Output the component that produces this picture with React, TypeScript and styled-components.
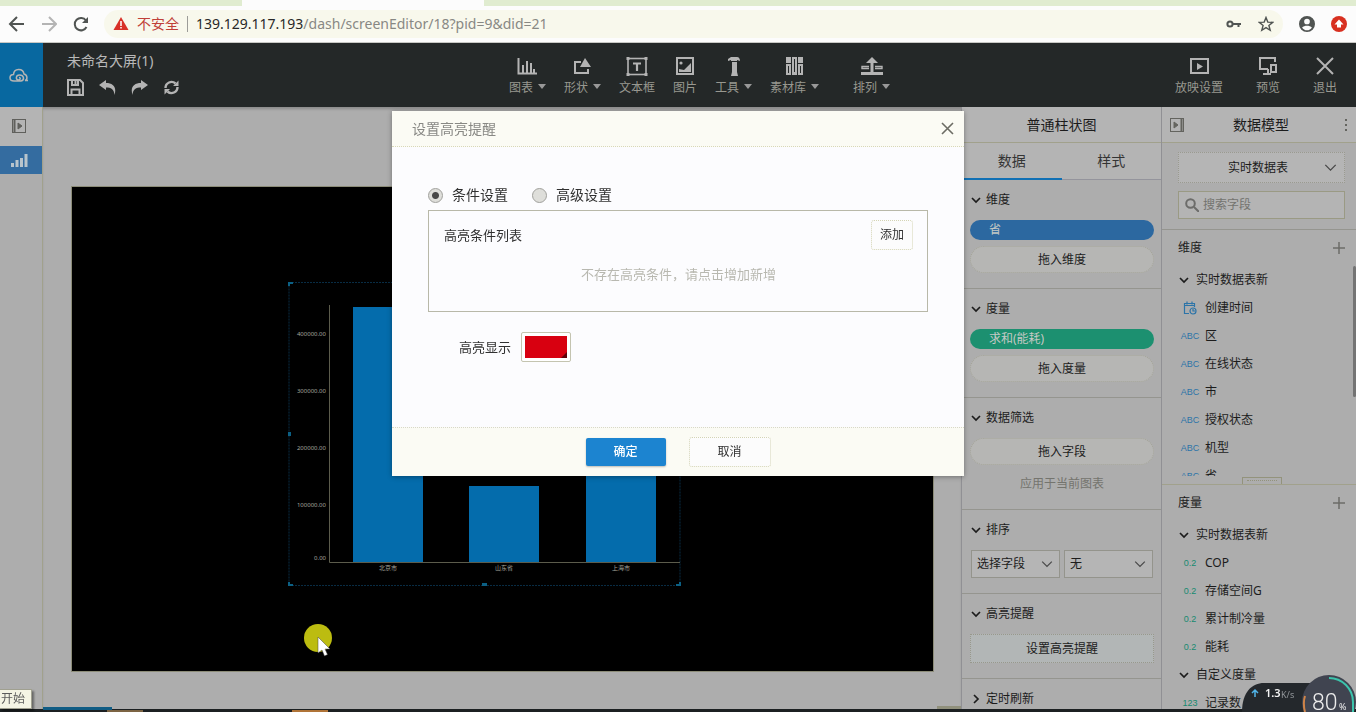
import React from "react";
import styled, { createGlobalStyle, css } from "styled-components";

const Global = createGlobalStyle`
  * { box-sizing: border-box; }
  html, body, #root { height: 100%; }
  body {
    margin: 0;
    overflow: hidden;
    font: 12px/20px "Noto Sans", "Noto Sans CJK SC", sans-serif;
    color: #1c1c1c;
    background: #aeaeae;
  }
  button, input, select { font: inherit; color: inherit; margin: 0; }
  button { border: 0; padding: 0; background: none; cursor: pointer; }
  a { color: inherit; text-decoration: none; }
  h1, h2, p, ul { margin: 0; padding: 0; font-weight: 400; font-size: inherit; list-style: none; }
`;

const c = {
  gray: "#adadad",
  light: "#b4b4b4",
  line: "#95958f",
  edge: "#a1a18c",
  dark: "#242828",
  icon: "#b4b4b4",
};

const Shell = styled.div`
  display: flex;
  flex-direction: column;
  height: 100vh;
`;

/* ---------- browser bar ---------- */
const Browser = styled.header`
  flex: none;
  background: #fcfcfc;
  border-bottom: 1px solid #c8c8c4;
`;
const TabStrip = styled.div`
  display: grid;
  grid-template-columns: 242px 242px 1fr;
  height: 6px;
  background: #e0ecd0;
`;
const ActiveTab = styled.div`
  grid-column: 2;
  background: #fcfcfc;
`;
const AddressRow = styled.div`
  display: flex;
  align-items: center;
  gap: 16px;
  height: 36px;
  padding: 0 9px 0 8px;
`;
const NavButton = styled.button<{ $dim?: boolean }>`
  display: flex;
  color: ${(p) => (p.$dim ? "#b4b4b4" : "#505452")};
`;
const Address = styled.div`
  flex: 1;
  display: flex;
  align-items: center;
  gap: 8px;
  height: 28px;
  margin-left: -1px;
  padding: 0 9px;
  border-radius: 14px;
  background: #f8f8ec;
  font-size: 14px;
`;
const PageActions = styled.div`
  display: flex;
  align-items: center;
  gap: 17px;
`;
const Insecure = styled.span`
  color: #c04038;
  padding-right: 8px;
  border-right: 1px solid #9c9c98;
  line-height: 16px;
`;
const Url = styled.span`
  flex: 1;
  color: #888884;
  b { font-weight: 400; color: #282828; }
`;

/* ---------- editor bar ---------- */
const EditorBar = styled.header`
  flex: none;
  display: grid;
  grid-template-columns: 43px 1fr auto 1fr;
  height: 64px;
  background: ${c.dark};
  color: ${c.icon};
`;
const Logo = styled.a`
  display: flex;
  align-items: center;
  justify-content: center;
  padding-right: 5px;
  background: #0868a0;
`;
const TitleBlock = styled.div`
  padding: 8px 24px;
  h1 { font-size: 14px; line-height: 20px; color: #b8b8b8; }
`;
const QuickActions = styled.div`
  display: flex;
  gap: 15px;
  margin-top: 8px;
  button { display: flex; color: ${c.icon}; }
`;
const Tools = styled.nav`
  display: flex;
  align-items: flex-start;
  gap: 18px;
  padding-top: 13px;
`;
const ToolButton = styled.button<{ $apart?: boolean }>`
  display: flex;
  flex-direction: column;
  align-items: center;
  gap: 1px;
  margin-left: ${(p) => (p.$apart ? "16px" : "0")};
  color: ${c.icon};
`;
const ToolLabel = styled.span`
  display: flex;
  align-items: center;
  gap: 5px;
  color: #989890;
`;
const Caret = styled.i`
  border: 4px solid transparent;
  border-top: 5px solid #989898;
  border-bottom: 0;
  margin-top: -3px;
`;
const RightTools = styled(Tools)`
  justify-content: flex-end;
  gap: 33px;
  padding-right: 19px;
`;

/* ---------- workspace ---------- */
const Work = styled.div`
  flex: 1;
  min-height: 0;
  display: flex;
  background: ${c.gray};
`;
const Rail = styled.nav`
  flex: none;
  width: 43px;
  border-right: 1px solid ${c.edge};
`;
const RailButton = styled.button<{ $active?: boolean }>`
  display: flex;
  align-items: center;
  justify-content: center;
  width: 100%;
  padding: ${(p) => (p.$active ? "0 4px 0 0" : "0 4px 2px 0")};
  height: ${(p) => (p.$active ? "28px" : "39px")};
  background: ${(p) => (p.$active ? "#346ca0" : c.light)};
  color: ${(p) => (p.$active ? "#b8c4cc" : "#60605c")};
`;
const CanvasArea = styled.main`
  flex: 1;
  min-width: 0;
  padding: 79px 27px 37px 28px;
  display: flex;
  box-shadow: inset 0 3px 3px -1px rgba(0, 0, 0, 0.2);
`;
const Stage = styled.div`
  flex: 1;
  position: relative;
  overflow: hidden;
  background: #000;
  border: 1px solid #8c8c78;
`;
const ChartWidget = styled.div`
  position: absolute;
  left: 216px;
  top: 95px;
  width: 393px;
  height: 306px;
  svg { display: block; }
`;

/* ---------- panels ---------- */
const Panel = styled.aside<{ $w: number }>`
  flex: none;
  width: ${(p) => p.$w}px;
  display: flex;
  flex-direction: column;
  overflow: hidden;
  border-left: 1px solid #909094;
`;
const PanelTitle = styled.div`
  flex: none;
  display: flex;
  align-items: center;
  justify-content: space-between;
  height: 36px;
  padding: 0 8px;
  background: ${c.light};
  border-bottom: 1px solid ${c.edge};
  font-size: 14px;
  h2 { flex: 1; text-align: center; }
  button { display: flex; justify-content: flex-end; min-width: 10px; color: #64645f; }
`;
const Tabs = styled.div`
  flex: none;
  display: grid;
  grid-template-columns: 1fr 1fr;
  height: 37px;
  background: ${c.light};
`;
const Tab = styled.button<{ $on?: boolean }>`
  font-size: 14px;
  color: #343434;
  border-bottom: ${(p) => (p.$on ? "2px solid #1070b4" : "1px solid #94949c")};
`;
const Section = styled.section`
  flex: none;
  padding: 10px 7px 15px 8px;
  border-bottom: 1px solid ${c.line};
`;
const SectionHead = styled.button`
  display: flex;
  align-items: center;
  gap: 5px;
  padding-left: 1px;
  margin-bottom: 10px;
`;
const FieldPill = styled.div<{ $color: string }>`
  padding: 0 19px;
  margin-bottom: 6px;
  border-radius: 10px;
  background: ${(p) => p.$color};
  color: #c4c8c4;
`;
const DropZone = styled.div`
  height: 27px;
  line-height: 26px;
  border: 1px dotted #a4a498;
  border-radius: 14px;
  background: #b6b6b4;
  text-align: center;
`;
const Scope = styled.p`
  margin-top: 9px;
  text-align: center;
  color: #74746e;
`;
const TwoSelects = styled.div`
  display: grid;
  grid-template-columns: 1fr 1fr;
  gap: 4px;
  padding: 0 1px;
`;
const SelectWrap = styled.div<{ $dotted?: boolean; $h: number }>`
  display: grid;
  align-items: center;
  height: ${(p) => p.$h}px;
  border: 1px ${(p) => (p.$dotted ? "dotted #9a9a90" : "solid #94948c")};
  background: #b5b5b5;
  > * { grid-area: 1 / 1; }
  > svg { justify-self: end; margin-right: ${(p) => (p.$dotted ? 7 : 6)}px; pointer-events: none; color: #484848; }
  select {
    appearance: none;
    width: 100%;
    height: 100%;
    padding: 0 5px;
    border: 0;
    background: transparent;
    ${(p) => p.$dotted && css`text-align-last: center; padding-right: 12px;`}
  }
`;
const WideButton = styled.button`
  display: block;
  width: 100%;
  height: 29px;
  border: 1px dotted #98988c;
  background: #b2b6b6;
`;
const ModelTop = styled.div`
  flex: none;
  display: flex;
  flex-direction: column;
  gap: 8px;
  padding: 9px 11px 10px 16px;
  border-bottom: 1px solid ${c.line};
`;
const Search = styled.label`
  display: flex;
  align-items: center;
  gap: 4px;
  height: 28px;
  padding-left: 6px;
  border: 1px solid #9a9a84;
  background: ${c.light};
  color: #6c6c6a;
  input {
    flex: 1;
    min-width: 0;
    border: 0;
    padding: 0;
    outline: 0;
    background: transparent;
    &::placeholder { color: #73736f; opacity: 1; }
  }
`;
const Group = styled.section<{ $h?: number }>`
  flex: none;
  position: relative;
  ${(p) => p.$h && css`height: ${p.$h}px; border-bottom: 1px solid ${c.edge};`}
`;
const GroupHead = styled.div`
  display: flex;
  align-items: center;
  justify-content: space-between;
  height: 36px;
  padding: 0 11px 0 16px;
  button { display: flex; color: #6c6c68; }
`;
const Tree = styled.ul<{ $h?: number }>`
  overflow: hidden;
  ${(p) => p.$h && css`height: ${p.$h}px;`}
`;
const Branch = styled.li`
  display: flex;
  align-items: center;
  gap: 7px;
  height: 28px;
  padding-left: 17px;
`;
const Leaf = styled.li`
  display: grid;
  grid-template-columns: 14px 1fr;
  align-items: center;
  gap: 8px;
  height: 28px;
  padding-left: 21px;
`;
const Kind = styled.span<{ $green?: boolean; $narrow?: boolean }>`
  display: flex;
  justify-content: center;
  white-space: nowrap;
  font: ${(p) => (p.$narrow ? '9px/14px "Liberation Sans Narrow"' : '9px/14px "Liberation Sans"')}, sans-serif;
  color: ${(p) => (p.$green ? "#168a70" : "#2c74a8")};
`;
const Handle = styled.div`
  position: absolute;
  right: 74px;
  bottom: 0;
  width: 40px;
  height: 7px;
  border: 1px solid #93937c;
  border-bottom: 0;
  &::before {
    content: "";
    display: block;
    margin: 2px 4px;
    border-top: 1px dotted #93937c;
  }
`;
const Thumb = styled.div`
  position: absolute;
  right: 0;
  top: 36px;
  width: 3px;
  height: 131px;
  border-radius: 2px;
  background: #747474;
`;
const TaskStrip = styled.footer`
  flex: none;
  display: flex;
  height: 3px;
  background: #1c2022;
`;
const TaskMark = styled.i<{ $x: number; $w: number; $color: string }>`
  width: ${(p) => p.$w}px;
  margin: 1px 0 0 ${(p) => p.$x}px;
  background: ${(p) => p.$color};
`;

/* ---------- dialog ---------- */
const Overlay = styled.div`
  position: fixed;
  inset: 0;
  display: flex;
  align-items: flex-start;
  justify-content: center;
  padding-top: 111px;
`;
const Dialog = styled.div`
  width: 572px;
  background: #fcfcfe;
  box-shadow: 0 1px 5px rgba(0, 0, 0, 0.35);
  border-radius: 0 0 2px 2px;
`;
const DialogHead = styled.div`
  display: flex;
  align-items: center;
  justify-content: space-between;
  height: 36px;
  padding: 0 10px 0 20px;
  background: #fbfbf4;
  border-bottom: 1px dotted #d8d8b8;
  font-size: 14px;
  color: #888884;
  button { display: flex; color: #6c6c64; }
`;
const DialogBody = styled.div`
  height: 280px;
  padding: 38px 36px 0;
  font-size: 13px;
  color: #303030;
`;
const Radios = styled.div`
  display: flex;
  gap: 24px;
  height: 25px;
  align-items: flex-start;
  font-size: 14px;
  label { display: flex; align-items: center; gap: 9px; }
  input {
    appearance: none;
    width: 15px;
    height: 15px;
    border: 1px solid #a0a09c;
    border-radius: 50%;
    background: #dededa;
    &:checked { background: radial-gradient(circle, #484848 0 3px, #dededa 4px); }
  }
`;
const Conditions = styled.div`
  height: 102px;
  padding: 9px 14px 0 15px;
  border: 1px solid #b8b8a8;
  p { text-align: center; color: #b8b8b0; margin-top: 14px; }
`;
const ConditionsHead = styled.div`
  display: flex;
  align-items: center;
  justify-content: space-between;
`;
const PlainButton = styled.button<{ $w: number }>`
  width: ${(p) => p.$w}px;
  height: 30px;
  border: 1px dotted #d4d4b4;
  border-radius: 3px;
  background: #fcfcfc;
  font-size: 12px;
  color: #303030;
`;
const PrimaryButton = styled.button`
  width: 80px;
  height: 28px;
  border-radius: 2px;
  background: #1c84d0;
  box-shadow: 0 1px 2px rgba(0, 0, 0, 0.25);
  color: #fff;
  font-size: 12px;
  font-weight: 500;
`;
const ColorRow = styled.label`
  display: flex;
  align-items: center;
  gap: 10px;
  margin: 20px 0 0 31px;
`;
const Swatch = styled.span`
  position: relative;
  display: flex;
  input {
    appearance: none;
    width: 50px;
    height: 30px;
    padding: 3px;
    border: 1px solid #c4c4b0;
    border-radius: 2px;
    background: #fff;
  }
  input::-webkit-color-swatch-wrapper { padding: 0; }
  input::-webkit-color-swatch { border: 0; border-radius: 0; }
  &::after {
    content: "";
    position: absolute;
    right: 4px;
    bottom: 4px;
    border: 3px solid transparent;
    border-right-color: #600008;
    border-bottom-color: #600008;
  }
`;
const DialogFoot = styled.div`
  display: flex;
  align-items: center;
  justify-content: center;
  gap: 23px;
  height: 49px;
  background: #fbfbf4;
  border-top: 1px dotted #d8d8c8;
`;

/* ---------- floating items ---------- */
const Floating = styled.div`
  position: fixed;
  display: flex;
`;
const SpeedBall = styled(Floating)`right: 0; bottom: 0;`;
const Pointer = styled(Floating)`left: 304px; top: 624px;`;
const StartTip = styled(Floating)`
  left: 0;
  bottom: 3px;
  width: 32px;
  padding-left: 1px;
  background: #f4f4e4;
  border: 1px solid #a0a090;
  border-left: 0;
  box-shadow: 2px 2px 2px rgba(0, 0, 0, 0.4);
  color: #5c5c5c;
  line-height: 18px;
`;
const TaskProgress = styled(Floating)`
  left: 43px;
  bottom: 2px;
  width: 69px;
  height: 3px;
  background: #105c84;
`;
const ScrollMark = styled.div`
  position: fixed;
  right: 395px;
  bottom: 3px;
  width: 24px;
  height: 3px;
  background: #90907c;
`;

type IconProps = { w?: number; h?: number; children: React.ReactNode; sw?: number; fill?: boolean; box?: string };
const Svg = ({ w = 20, h = 20, children, sw = 2, fill, box }: IconProps) => (
  <svg width={w} height={h} viewBox={box ?? `0 0 ${w} ${h}`} aria-hidden="true"
    fill={fill ? "currentColor" : "none"} stroke={fill ? "none" : "currentColor"} strokeWidth={sw}>
    {children}
  </svg>
);
const Down = ({ size = 10, sw = 1.7 }: { size?: number; sw?: number }) => (
  <Svg w={size} h={size} box="0 0 10 10" sw={sw}><path d="M1 3l4 4 4-4" /></Svg>
);

const tools = [
  { label: "图表", caret: true, icon: <Svg h={21}><path d="M1.5 2v15.5H20M6 17V9M10 17V5M14 17V7M17 17v-4" /></Svg> },
  { label: "形状", caret: true, icon: <Svg h={21}><path d="M9 6H3v11h13v-4" /><path d="M13 2l6 9H8z" fill="currentColor" stroke="none" /></Svg> },
  {
    label: "文本框",
    icon: (
      <Svg w={22} h={21} sw={1.6}>
        <rect x="2" y="2.500" width="18" height="16" />
        <path d="M0.500 1h3v3h-3zM18.500 1h3v3h-3zM0.500 17h3v3h-3zM18.500 17h3v3h-3z" fill="currentColor" stroke="none" />
        <path d="M7 7.500h8M11 7.500v7.500" strokeWidth={2.2} />
      </Svg>
    ),
  },
  { label: "图片", icon: <Svg h={21}><rect x="2" y="2" width="16" height="16" /><path d="M4 16v-3l5 1 7-7v9z" fill="currentColor" stroke="none" /><circle cx="6" cy="7" r="1.6" fill="currentColor" stroke="none" /></Svg> },
  { label: "工具", caret: true, icon: <Svg h={21} fill><path d="M4 3l3-2h6c2 0 3 2 3 4l-3-1v1H7V4L4 5zM8 6h5v10l1 4H7l1-4z" /></Svg> },
  { label: "素材库", caret: true, icon: <Svg h={21} fill><path d="M1 1h5v6H1zM1 8h5v11H1zM7 1h5v18H7zM13 1h5v6h-5zM13 8h5v11h-5z" /><path d="M3 10h1v7H3zM9 3h1v13H9zM15 10h1v7h-1z" fill={c.dark} /></Svg> },
  { label: "排列", caret: true, apart: true, icon: <Svg w={22} h={21}><path d="M8 10.500H1v2h7M14 10.500h7v2h-7" strokeWidth={1.4} /><path d="M0 17.500h22M11 17V6" strokeWidth={3} /><path d="M11 1l6 6H5z" fill="currentColor" stroke="none" /></Svg> },
];
const rightTools = [
  { label: "放映设置", icon: <Svg h={21}><rect x="2" y="3" width="17" height="14" /><path d="M8 7l6 3.500L8 14z" fill="currentColor" stroke="none" /></Svg> },
  { label: "预览", icon: <Svg h={21}><path d="M10 13H2V2h15v4M10 13v5M5 18h8" /><rect x="13" y="9" width="5" height="7" /></Svg> },
  { label: "退出", icon: <Svg h={21}><path d="M2 2l16 16M18 2L2 18" /></Svg> },
];
const dimensions = ["区", "在线状态", "市", "授权状态", "机型", "省"];
const measures = ["COP", "存储空间G", "累计制冷量", "能耗"];

const yTicks: [string, number][] = [["400000.00", 53], ["300000.00", 110], ["200000.00", 167], ["100000.00", 224], ["0.00", 277]];
const bars: [string, number, number][] = [["北京市", 65, 25], ["山东省", 181, 204], ["上海市", 298, 90]];

const Chart = () => (
  <ChartWidget>
    <svg width="393" height="306" role="img" aria-label="普通柱状图">
      <rect x="1" y="0.500" width="391" height="303" fill="none" stroke="#082c44" strokeDasharray="2 1" />
      {yTicks.map(([t, y]) => (
        <text key={t} x="38" y={y + 1} textAnchor="end" fontSize="6" fill="#a4a49c">{t}</text>
      ))}
      <path d="M41.500 23V280.500H392" fill="none" stroke="#5c5c4c" />
      {bars.map(([t, x, top]) => (
        <g key={t}>
          <rect x={x} y={top} width="70" height={280 - top} fill="#046cac" />
          <text x={x + 35} y="288" textAnchor="middle" fontSize="6" fill="#a4a49c">{t}</text>
        </g>
      ))}
      <path d="M1 4V1h4M1 300v3h4M388 303h4v-3" fill="none" stroke="#0c6084" strokeWidth="2" />
      <path d="M0 150h3v4H0zM194 301h5v3h-5z" fill="#0c6084" />
    </svg>
  </ChartWidget>
);

const Head = ({ children }: { children: React.ReactNode }) => (
  <SectionHead type="button"><Down />{children}</SectionHead>
);
const CalendarIcon = () => (
  <Svg w={14} h={14} sw={1.2}><path d="M6 12.500H1.500V2.500H11.500V6M1.500 4.500H11.500M4 0.500v3M9 0.500v3" /><circle cx="10" cy="10" r="3" /><path d="M10 8v2h2" /></Svg>
);
const Plus = () => <Svg w={12} h={12} sw={1.5}><path d="M6 0v12M0 6h12" /></Svg>;

export default function App() {
  return (
    <>
      <Global />
      <Shell>
        <Browser>
          <TabStrip><ActiveTab /></TabStrip>
          <AddressRow>
            <NavButton aria-label="后退"><Svg w={17} h={16}><path d="M16 8H2M9 1L2 8l7 7" /></Svg></NavButton>
            <NavButton aria-label="前进" $dim><Svg w={16} h={16}><path d="M1 8h13M8 1l7 7-7 7" /></Svg></NavButton>
            <NavButton aria-label="重新加载"><Svg w={16} h={16}><path d="M13.500 11A6.200 6.200 0 1 1 13 4.500" /><path d="M15 1v6H9z" fill="currentColor" stroke="none" /></Svg></NavButton>
            <Address>
              <svg width="16" height="16" viewBox="0 0 16 16" aria-hidden="true"><path d="M8 1l7.500 13H.5z" fill="#d83028" /><path d="M8 5v5M8 11v1.500" stroke="#fff" strokeWidth="1.500" /></svg>
              <Insecure>不安全</Insecure>
              <Url><b>139.129.117.193</b>/dash/screenEditor/18?pid=9&amp;did=21</Url>
              <PageActions>
                <NavButton aria-label="密码"><Svg w={15} h={12} sw={2}><circle cx="4" cy="6" r="2.600" /><path d="M7 6h8M12.500 6v3" /></Svg></NavButton>
                <NavButton aria-label="收藏"><Svg w={16} h={16} sw={1.4}><path d="M8 1.500l1.800 4.600 4.900.3-3.800 3.100 1.300 4.800L8 11.600l-4.200 2.700 1.300-4.800L1.300 6.400l4.900-.3z" /></Svg></NavButton>
              </PageActions>
            </Address>
            <NavButton aria-label="用户"><Svg w={16} h={16} box="0 0 18 18" fill><path fillRule="evenodd" d="M9 0a9 9 0 1 1 0 18A9 9 0 0 1 9 0zm0 3a3.200 3.200 0 1 0 0 6.400A3.200 3.200 0 0 0 9 3zm-5.500 9.800C4.700 14.800 6.700 16 9 16s4.300-1.200 5.500-3.200C13.500 11.500 11 10.900 9 10.900s-4.500.6-5.500 1.900z" /></Svg></NavButton>
            <NavButton aria-label="更新"><svg width="16" height="16" viewBox="0 0 16 16"><circle cx="8" cy="8" r="8" fill="#d83020" /><path d="M8 3.500l4.500 5H10v3H6v-3H3.500z" fill="#fff" /></svg></NavButton>
          </AddressRow>
        </Browser>

        <EditorBar>
          <Logo href="#" aria-label="首页">
            <Svg w={20} h={15} sw={1.5}><path d="M5 13C-.5 13 0 6.500 4.500 6.500 5 0 14 0 15 6c4 1 3.500 6 1 6.500h3M5 13h7c4-1 3-6-1.500-6-4 0-4 5-1 5 2.500 0 2-3 .5-2.500" /></Svg>
          </Logo>
          <TitleBlock>
            <h1>未命名大屏(1)</h1>
            <QuickActions>
              <button aria-label="保存"><Svg w={17} h={17}><path d="M1 1h12l3 3v12H1z" /><path d="M5 2v4h6V2M4.500 15v-4.500h8V15M8.500 2v3" /></Svg></button>
              <button aria-label="撤销"><Svg w={17} h={17} fill><path d="M0 6l7-5v3c7 0 11 4 8.500 12C15 10 12 8.500 7 8.500V11z" /></Svg></button>
              <button aria-label="重做"><Svg w={17} h={17} fill><path d="M17 6l-7-5v3C3 4-1 8 1.500 16 2 10 5 8.500 10 8.500V11z" /></Svg></button>
              <button aria-label="刷新"><Svg w={17} h={17}><path d="M2.500 9A6 6 0 0 1 12.500 4.500M14.500 8A6 6 0 0 1 4.500 12.500" strokeWidth={2.4} /><path d="M15.500 1.500v5.500H10zM1.500 15.500V10H7z" fill="currentColor" stroke="none" /></Svg></button>
            </QuickActions>
          </TitleBlock>
          <Tools>
            {tools.map((t) => (
              <ToolButton key={t.label} $apart={t.apart}>{t.icon}<ToolLabel>{t.label}{t.caret && <Caret />}</ToolLabel></ToolButton>
            ))}
          </Tools>
          <RightTools>
            {rightTools.map((t) => (
              <ToolButton key={t.label}>{t.icon}<ToolLabel>{t.label}</ToolLabel></ToolButton>
            ))}
          </RightTools>
        </EditorBar>

        <Work>
          <Rail>
            <RailButton aria-label="展开"><Svg w={14} h={14} sw={1}><rect x="0.500" y="0.500" width="13" height="13" /><path d="M2.500 1v12" strokeWidth={2} /><path d="M6 4l4 3-4 3z" fill="currentColor" /></Svg></RailButton>
            <RailButton aria-label="图表" $active><Svg w={17} h={13} fill><path d="M0 9h3v4H0zM4.500 6h3v7h-3zM9 4h3v9H9zM13.500 0h3v13h-3z" /></Svg></RailButton>
          </Rail>
          <CanvasArea><Stage><Chart /></Stage></CanvasArea>

          <Panel $w={200}>
            <PanelTitle><h2>普通柱状图</h2></PanelTitle>
            <Tabs><Tab $on>数据</Tab><Tab>样式</Tab></Tabs>
            <Section>
              <Head>维度</Head>
              <FieldPill $color="#2c68a0">省</FieldPill>
              <DropZone>拖入维度</DropZone>
            </Section>
            <Section>
              <Head>度量</Head>
              <FieldPill $color="#1c9070">求和(能耗)</FieldPill>
              <DropZone>拖入度量</DropZone>
            </Section>
            <Section>
              <Head>数据筛选</Head>
              <DropZone>拖入字段</DropZone>
              <Scope>应用于当前图表</Scope>
            </Section>
            <Section>
              <Head>排序</Head>
              <TwoSelects>
                <SelectWrap $h={28}><select aria-label="排序字段"><option>选择字段</option></select><Down size={12} sw={1} /></SelectWrap>
                <SelectWrap $h={28}><select aria-label="排序方式"><option>无</option></select><Down size={12} sw={1} /></SelectWrap>
              </TwoSelects>
            </Section>
            <Section>
              <Head>高亮提醒</Head>
              <WideButton>设置高亮提醒</WideButton>
            </Section>
            <Section>
              <SectionHead><Svg w={10} h={10} sw={1.7}><path d="M3 1l4 4-4 4" /></Svg>定时刷新</SectionHead>
            </Section>
          </Panel>

          <Panel $w={195}>
            <PanelTitle>
              <button aria-label="收起"><Svg w={14} h={14} sw={1}><rect x="0.500" y="0.500" width="13" height="13" /><path d="M11.500 1v12" strokeWidth={2} /><path d="M4 4l4 3-4 3z" fill="currentColor" /></Svg></button>
              <h2>数据模型</h2>
              <button aria-label="更多"><Svg w={4} h={14} fill><path d="M1 1h2v2H1zM1 6h2v2H1zM1 11h2v2H1z" /></Svg></button>
            </PanelTitle>
            <ModelTop>
              <SelectWrap $dotted $h={31}><select aria-label="数据表"><option>实时数据表</option></select><Down size={13} sw={1} /></SelectWrap>
              <Search>
                <Svg w={14} h={14}><circle cx="5.500" cy="5.500" r="4.300" /><path d="M9 9l5 5" /></Svg>
                <input placeholder="搜索字段" aria-label="搜索字段" />
              </Search>
            </ModelTop>
            <Group $h={255}>
              <GroupHead>维度<button aria-label="新增维度"><Plus /></button></GroupHead>
              <Tree $h={210}>
                <Branch><Down />实时数据表新</Branch>
                <Leaf><Kind><CalendarIcon /></Kind>创建时间</Leaf>
                {dimensions.map((n) => (
                  <Leaf key={n}><Kind $narrow>ABC</Kind>{n}</Leaf>
                ))}
              </Tree>
              <Handle />
              <Thumb />
            </Group>
            <Group>
              <GroupHead>度量<button aria-label="新增度量"><Plus /></button></GroupHead>
              <Tree>
                <Branch><Down />实时数据表新</Branch>
                {measures.map((n) => (
                  <Leaf key={n}><Kind $green>0.2</Kind>{n}</Leaf>
                ))}
                <Branch><Down />自定义度量</Branch>
                <Leaf><Kind $green>123</Kind>记录数</Leaf>
              </Tree>
            </Group>
          </Panel>
        </Work>
        <TaskStrip>
          <TaskMark $x={107} $w={36} $color="#7c6444" />
          <TaskMark $x={149} $w={36} $color="#b07438" />
        </TaskStrip>
      </Shell>

      <TaskProgress />
      <ScrollMark />
      <StartTip>开始</StartTip>
      <Pointer>
        <svg width="30" height="34" aria-hidden="true">
          <circle cx="14" cy="14" r="14" fill="#bcbc10" />
          <path d="M14 13v16l4-3 2.500 6 3-1.500L21 25h5z" fill="#fff" stroke="#444" strokeWidth="0.500" />
        </svg>
      </Pointer>

      <Overlay>
        <Dialog role="dialog" aria-label="设置高亮提醒">
          <DialogHead>
            <h2>设置高亮提醒</h2>
            <button aria-label="关闭"><Svg w={13} h={13} sw={1.6}><path d="M1 1l11 11M12 1L1 12" /></Svg></button>
          </DialogHead>
          <DialogBody>
            <Radios>
              <label><input type="radio" name="mode" defaultChecked />条件设置</label>
              <label><input type="radio" name="mode" />高级设置</label>
            </Radios>
            <Conditions>
              <ConditionsHead>高亮条件列表<PlainButton $w={42}>添加</PlainButton></ConditionsHead>
              <p>不存在高亮条件，请点击增加新增</p>
            </Conditions>
            <ColorRow>高亮显示<Swatch><input type="color" defaultValue="#d80010" /></Swatch></ColorRow>
          </DialogBody>
          <DialogFoot>
            <PrimaryButton>确定</PrimaryButton>
            <PlainButton $w={82}>取消</PlainButton>
          </DialogFoot>
        </Dialog>
      </Overlay>

      <SpeedBall>
        <svg width="116" height="40" role="img" aria-label="80%">
          <path d="M2 40C2 20 12 11 24 11H80V40z" fill="#24282c" />
          <path d="M15 25V18M12 21l3-3 3 3" stroke="#50b4e8" strokeWidth="1.500" fill="none" />
          <text x="25" y="25" fontSize="11" fontWeight="600" fill="#f4f4f4">1.3</text>
          <text x="41" y="26" fontSize="9" fill="#909498">K/s</text>
          <circle cx="89" cy="30" r="27" fill="#404450" />
          <path d="M89 6A24 24 0 0 1 113 30V40" stroke="#3cc4ac" strokeWidth="2" fill="none" />
          <path d="M65 24C63 30 64 36 65 40" stroke="#d08448" strokeWidth="2" fill="none" />
          <text x="72" y="38" fontSize="23" fontWeight="300" fontFamily="Roboto, sans-serif" fill="#ececec">80</text>
          <text x="99" y="38" fontSize="9" fill="#ececec">%</text>
        </svg>
      </SpeedBall>
    </>
  );
}
